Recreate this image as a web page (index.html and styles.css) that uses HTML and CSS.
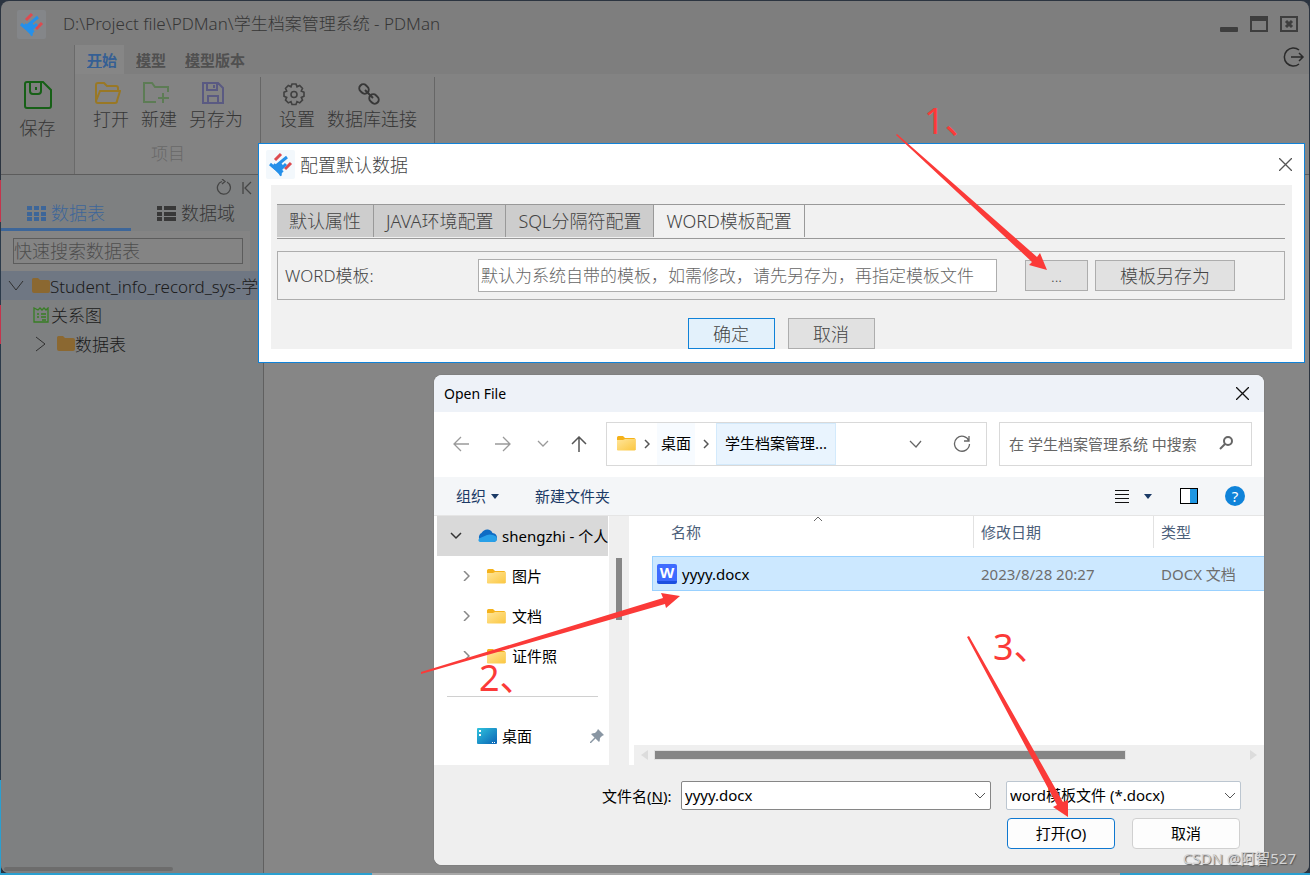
FILE: index.html
```html
<!DOCTYPE html>
<html lang="zh-CN">
<head>
    <meta charset="UTF-8">
    <meta name="viewport" content="width=device-width, initial-scale=1.0">
    <title>学生档案管理系统 - PDMan</title>
    <link rel="stylesheet" href="styles.css">
</head>
<body>
    <!-- Shared icons -->
    <svg class="defs" width="0" height="0">
        <symbol id="logo" viewBox="0 0 29 29">
            <g fill="none" stroke-width="3">
                <path class="logo-red" d="M9 10l6-6M19 19l6-6"/>
                <path class="logo-blue" d="M10 16l11-9M4 14l6 5 5 5M14 20l6-6" />
                <path class="logo-blue" stroke-width="5" d="M7 15l9 8M11 18l5-4M13 24l2-1"/>
            </g>
        </symbol>
        <symbol id="folder" viewBox="0 0 19 15">
            <path d="M0 1.500Q0 0 1.500 0H6L8 2H17Q18.500 2 18.500 3.500V14H0z" fill="#f5b21a"/>
            <path d="M0 4H6L8 3H18.500V13.500Q18.500 14.500 17.500 14.500H1Q0 14.500 0 13.500z" fill="url(#gold)"/>
        </symbol>
        <linearGradient id="gold" x1="0" y1="0" x2="1" y2="1">
            <stop offset="0" stop-color="#ffe59a"/>
            <stop offset="1" stop-color="#fbc740"/>
        </linearGradient>
        <linearGradient id="azure" x1="0" y1="0" x2="1" y2="1">
            <stop offset="0" stop-color="#2fc3dd"/>
            <stop offset="1" stop-color="#0b63b5"/>
        </linearGradient>
    </svg>

    <!-- Main window -->
    <div class="app">
        <header class="titlebar">
            <svg class="logo logo-dim" width="29" height="29"><use href="#logo"/></svg>
            <h1>D:\Project file\PDMan\学生档案管理系统 - PDMan</h1>
            <div class="win-buttons">
                <button aria-label="最小化"><svg width="18" height="16"><rect y="11" width="18" height="5" rx="1" fill="#3e3e3e"/></svg></button>
                <button aria-label="最大化"><svg width="18" height="16"><rect x="1" y="1" width="16" height="14" fill="none" stroke="#3e3e3e" stroke-width="2"/><path d="M0 0h18v5H0z" fill="#3e3e3e"/></svg></button>
                <button aria-label="关闭"><svg width="18" height="16"><rect x="1" y="1" width="16" height="14" fill="none" stroke="#3e3e3e" stroke-width="2"/><path d="M6 5l6 6M12 5l-6 6" stroke="#3e3e3e" stroke-width="3"/></svg></button>
            </div>
        </header>

        <div class="ribbon">
            <button class="save">
                <svg width="28" height="28" fill="none" stroke="#176017" stroke-width="2"><path d="M3 1h16l8 8v16q0 2-2 2H3q-2 0-2-2V3q0-2 2-2zM6 1v9q0 3 3 3h5q3 0 3-3V1"/><path d="M12 6v3"/></svg>
                保存
            </button>
            <div class="ribbon-main">
                <nav class="menu">
                    <a class="active" href="#"><u>开</u>始</a>
                    <a href="#"><u>模</u>型</a>
                    <a href="#"><u>模</u>型版本</a>
                    <button class="exit" aria-label="退出"><svg width="22" height="20" fill="none" stroke="#2a2a2a" stroke-width="1.500"><path d="M16 3A9 9 0 1 0 16 17M8 10h11M16 6l4 4-4 4"/></svg></button>
                </nav>
                <div class="groups">
                    <div class="group">
                        <div class="tools">
                            <button><svg width="26" height="22" fill="none" stroke="#997825" stroke-width="2"><path d="M1 19V3q0-2 2-2h6l3 3h9q2 0 2 2v3M1 19L5 9h20l-3 10q0 2-2 2H3q-2 0-2-2z"/></svg>打开</button>
                            <button><svg width="26" height="22" fill="none" stroke="#5d7c55" stroke-width="2"><path d="M13 20H1V1h8l3 4h13v5M20 11v10M15 16h11"/></svg>新建</button>
                            <button><svg width="26" height="22" fill="none" stroke="#5a5a82" stroke-width="2"><path d="M3 1h15l5 5v15H3zM7 1v7h10V1M8 21v-7h10v7M14 3v3"/></svg>另存为</button>
                        </div>
                        <div class="caption">项目</div>
                    </div>
                    <div class="group">
                        <div class="tools">
                            <button><svg width="24" height="24" viewBox="0 0 24 24" fill="none" stroke="#414141" stroke-width="1.600"><circle cx="12" cy="12" r="3"/><path d="M10 1.500h4l1 2.800 2.700-1.300 2.800 2.900-1.200 2.600 2.700 1.200v4l-2.700 1.200 1.200 2.700-2.800 2.800-2.700-1.300-1 2.900h-4l-1-2.900-2.700 1.300-2.800-2.800 1.200-2.700L2 13.700v-4l2.700-1.200L3.500 5.900 6.300 3 9 4.300z"/></svg>设置</button>
                            <button><svg width="24" height="24" fill="none" stroke="#383838" stroke-width="2"><rect x="2" y="3" width="10" height="8" rx="4" transform="rotate(45 7 7)"/><rect x="12" y="13" width="10" height="8" rx="4" transform="rotate(45 17 17)"/><path d="M8 8l8 8"/></svg>数据库连接</button>
                        </div>
                    </div>
                </div>
            </div>
        </div>

        <div class="workspace">
            <aside class="sidebar">
                <div class="side-actions">
                    <button aria-label="刷新"><svg width="16" height="16" fill="none" stroke="#454545" stroke-width="1.300"><path d="M11 3A6.500 6.500 0 1 1 6 2.500M6 0l3 2.500L6 5"/></svg></button>
                    <button aria-label="收起"><svg width="10" height="14" fill="none" stroke="#454545" stroke-width="1.300"><path d="M1 1v12M9 1L3 7l6 6"/></svg></button>
                </div>
                <div class="side-tabs">
                    <button class="active"><svg width="19" height="15" fill="#3d6699"><path d="M0 0h5v4H0zM7 0h5v4H7zM14 0h5v4h-5zM0 6h5v4H0zM7 6h5v4H7zM14 6h5v4h-5zM0 11h5v4H0zM7 11h5v4H7zM14 11h5v4h-5z"/></svg>数据表</button>
                    <button><svg width="19" height="15" fill="#383838"><path d="M0 0h5v4H0zM7 0h12v4H7zM0 6h5v4H0zM7 6h12v4H7zM0 11h5v4H0zM7 11h12v4H7z"/></svg>数据域</button>
                </div>
                <div class="side-search">
                    <input type="text" aria-label="快速搜索数据表" placeholder="快速搜索数据表">
                </div>
                <ul class="tree">
                    <li class="selected">
                        <svg class="twist" width="16" height="12" fill="none" stroke="#303030"><path d="M1 1l7 9 7-9"/></svg>
                        <svg width="18" height="15" fill="#8b6831"><path d="M0 1.500Q0 0 1.500 0H6L8 2h8q2 0 2 2v9q0 2-2 2H2q-2 0-2-2z"/></svg>
                        <span>Student_info_record_sys-学</span>
                    </li>
                    <li class="leaf">
                        <svg width="18" height="16" fill="none" stroke="#387d25" stroke-width="1.300"><path d="M1 1v14h14V1l-2 2-2-2-2 2-2-2-2 2zM4 7h2M8 7h5M4 10h2M8 10h5M9 13h4"/></svg>
                        <span>关系图</span>
                    </li>
                    <li class="branch">
                        <svg class="twist" width="16" height="16" fill="none" stroke="#303030"><path d="M3 1l9 7-9 7"/></svg>
                        <svg width="18" height="15" fill="#8b6831"><path d="M0 1.500Q0 0 1.500 0H6L8 2h8q2 0 2 2v9q0 2-2 2H2q-2 0-2-2z"/></svg>
                        <span>数据表</span>
                    </li>
                </ul>
                <div class="side-scroll"></div>
            </aside>
            <main class="canvas"></main>
        </div>
    </div>

    <!-- Default data dialog -->
    <section class="config">
        <header>
            <svg class="logo" width="29" height="29"><use href="#logo"/></svg>
            <h2>配置默认数据</h2>
            <button class="close" aria-label="关闭"><svg width="13" height="13" stroke="#555" stroke-width="1.300"><path d="M0 0l13 13M13 0L0 13"/></svg></button>
        </header>
        <div class="config-body">
            <div class="config-tabs">
                <button>默认属性</button>
                <button>JAVA环境配置</button>
                <button>SQL分隔符配置</button>
                <button class="active">WORD模板配置</button>
            </div>
            <div class="config-row">
                <label for="template">WORD模板:</label>
                <input type="text" id="template" placeholder="默认为系统自带的模板，如需修改，请先另存为，再指定模板文件">
                <button class="browse">...</button>
                <button class="save-as">模板另存为</button>
            </div>
            <div class="config-footer">
                <button class="primary">确定</button>
                <button>取消</button>
            </div>
        </div>
    </section>

    <!-- Open file dialog -->
    <section class="picker">
        <header>
            <h2>Open File</h2>
            <button aria-label="关闭"><svg width="13" height="13" stroke="#111" stroke-width="1.300"><path d="M0 0l13 13M13 0L0 13"/></svg></button>
        </header>
        <div class="picker-nav">
            <div class="arrows">
                <button aria-label="后退"><svg width="16" height="16" fill="none" stroke="#9a9a9a" stroke-width="1.300"><path d="M16 8H1M8 1L1 8l7 7"/></svg></button>
                <button aria-label="前进"><svg width="16" height="16" fill="none" stroke="#9a9a9a" stroke-width="1.300"><path d="M0 8h15M8 1l7 7-7 7"/></svg></button>
                <button aria-label="最近"><svg width="12" height="16" fill="none" stroke="#9a9a9a" stroke-width="1.300"><path d="M1 5l5 5 5-5"/></svg></button>
                <button aria-label="上移"><svg width="16" height="16" fill="none" stroke="#555" stroke-width="1.500"><path d="M8 16V1M1 8l7-7 7 7"/></svg></button>
            </div>
            <div class="path">
                <svg class="path-icon" width="19" height="15"><use href="#folder"/></svg>
                <svg class="path-sep" width="6" height="10" fill="none" stroke="#555" stroke-width="1.500"><path d="M1 1l4 4-4 4"/></svg>
                <a class="crumb" href="#">桌面</a>
                <svg class="path-sep" width="6" height="10" fill="none" stroke="#555" stroke-width="1.500"><path d="M1 1l4 4-4 4"/></svg>
                <a class="crumb current" href="#">学生档案管理...</a>
                <button class="history" aria-label="历史"><svg width="13" height="8" fill="none" stroke="#666" stroke-width="1.300"><path d="M1 1l6 6 5-6"/></svg></button>
                <button aria-label="刷新"><svg width="18" height="18" fill="none" stroke="#666" stroke-width="1.300"><path d="M16 6A7.500 7.500 0 1 0 16.500 9M16 1v5h-5"/></svg></button>
            </div>
            <div class="search">
                <input type="text" aria-label="搜索" placeholder="在 学生档案管理系统 中搜索">
                <svg width="15" height="15" fill="none" stroke="#666" stroke-width="2"><circle cx="9" cy="5" r="4"/><path d="M6 8l-5 5"/></svg>
            </div>
        </div>
        <div class="picker-tools">
            <button>组织<svg width="8" height="5" fill="#1b3a66"><path d="M0 0h8L4 5z"/></svg></button>
            <button>新建文件夹</button>
            <button class="view" aria-label="视图"><svg width="14" height="14" stroke="#111" stroke-width="1"><path d="M0 1.500h14M0 5.500h14M0 9.500h14M0 13.500h14"/></svg><svg width="8" height="5" fill="#1b3a66"><path d="M0 0h8L4 5z"/></svg></button>
            <button aria-label="预览窗格"><svg width="18" height="16"><rect x="1" y="1" width="16" height="14" fill="#fff"/><path d="M10 1h7v14h-7z" fill="#1f97e3"/><rect x=".5" y=".5" width="17" height="15" fill="none" stroke="#000"/></svg></button>
            <button class="help" aria-label="帮助">?</button>
        </div>
        <div class="picker-body">
            <div class="places">
                <ul>
                    <li class="root">
                        <svg width="12" height="8" fill="none" stroke="#333" stroke-width="1.500"><path d="M1 1l5 5 5-5"/></svg>
                        <svg width="20" height="14"><path d="M5 13a5 5 0 0 1-.5-9Q7 0 11 .500q3.500.500 4.500 3.500 4.500.500 4.500 5 0 4-4 4z" fill="#0f6cc4"/><path d="M3 13Q.500 12 2 9.500l8-3.500q3-1 6 0 4 1 4 4 0 3-4 3z" fill="#28a0e8"/></svg>
                        <span>shengzhi - 个人</span>
                    </li>
                    <li class="child"><svg width="7" height="10" fill="none" stroke="#888" stroke-width="1.500"><path d="M1 0l5 5-5 5"/></svg><svg width="19" height="15"><use href="#folder"/></svg><span>图片</span></li>
                    <li class="child"><svg width="7" height="10" fill="none" stroke="#888" stroke-width="1.500"><path d="M1 0l5 5-5 5"/></svg><svg width="19" height="15"><use href="#folder"/></svg><span>文档</span></li>
                    <li class="child"><svg width="7" height="10" fill="none" stroke="#888" stroke-width="1.500"><path d="M1 0l5 5-5 5"/></svg><svg width="19" height="15"><use href="#folder"/></svg><span>证件照</span></li>
                    <li class="line"></li>
                    <li class="desktop">
                        <svg width="20" height="16"><rect width="20" height="16" rx="1" fill="url(#azure)"/><path d="M2 2h2v2H2zM2 6h2v2H2zM15 14h1v1h-1zM17 14h1v1h-1z" fill="#fff"/></svg>
                        <span>桌面</span>
                        <svg class="pin" width="14" height="14" fill="#8996a3"><path d="M8 0l6 6-2 1-2 2q0 3-1 4L5.500 9.500 1 14l-1 0 0-1L4.500 8.500 1 5q2-1 4-1l2-2z"/></svg>
                    </li>
                </ul>
                <div class="v-scroll"><div class="v-thumb"></div></div>
            </div>
            <div class="files">
                <table>
                    <thead>
                        <tr>
                            <th class="name">名称<svg class="sort" width="10" height="6" fill="none" stroke="#666"><path d="M1 5l4-4 4 4"/></svg></th>
                            <th class="date">修改日期</th>
                            <th class="type">类型</th>
                        </tr>
                    </thead>
                    <tbody>
                        <tr>
                            <td><div class="file"><span class="word">W</span>yyyy.docx</div></td>
                            <td>2023/8/28 20:27</td>
                            <td>DOCX 文档</td>
                        </tr>
                    </tbody>
                </table>
                <div class="h-scroll">
                    <svg width="7" height="10" fill="#dcdcdc"><path d="M7 0v10L0 5z"/></svg>
                    <div class="h-track"><div class="h-thumb"></div></div>
                    <svg width="7" height="10" fill="#dcdcdc"><path d="M0 0v10l7-5z"/></svg>
                </div>
            </div>
        </div>
        <footer>
            <div class="fields">
                <label for="filename">文件名(<u>N</u>):</label>
                <input type="text" id="filename" value="yyyy.docx">
                <select aria-label="文件类型">
                    <option>word模板文件 (*.docx)</option>
                </select>
            </div>
            <div class="actions">
                <button class="open">打开(O)</button>
                <button>取消</button>
            </div>
        </footer>
    </section>

    <!-- Step arrows -->
    <svg class="steps" width="1310" height="875">
        <path d="M897 134L1037 257 1040 253 1047 270 1029 265 1032 262 896 135z"/>
        <path d="M421 672L663 598 661 593 680 596 666 608 665 604 421 674z"/>
        <path d="M969 636L1063 802 1068 800 1068 817 1053 807 1057 805 967 637z"/>
        <text x="924" y="134">1、</text>
        <text x="479" y="691">2、</text>
        <text x="993" y="660">3、</text>
    </svg>
    <div class="credit">CSDN @阿智527</div>
</body>
</html>
```
FILE: styles.css
```css
* {
    box-sizing: border-box;
}

body {
    margin: 0;
    height: 100vh;
    padding: 1px 1px 2px;
    position: relative;
    overflow: hidden;
    font-family: "Noto Sans", "Noto Sans CJK SC", sans-serif;
    font-size: 17px;
    line-height: 24px;
    color: #444;
    background: linear-gradient(#2b3440 0 180px, #c4344c 180px 222px, #2b3a4a 222px 305px, #c4344c 305px 344px, #2b3a4a 344px 780px, #2a9fd0 780px) left / 1px 100% no-repeat,
        linear-gradient(90deg, #2a9fd0 0 372px, #a8a8a8 372px 1120px, #2a9fd0 1120px) bottom / 100% 2px no-repeat,
        #2b3440;
}

button, input, select {
    font: inherit;
    color: inherit;
}

button {
    border: 0;
    padding: 0;
    background: none;
    cursor: pointer;
}

h1, h2 {
    margin: 0;
    font-size: 17px;
    font-weight: 300;
}

ul {
    margin: 0;
    padding: 0;
    list-style: none;
}

a {
    color: inherit;
    text-decoration: none;
}

svg {
    flex: none;
}

.defs {
    position: absolute;
}

.logo {
    background: #f3f8fc;
    border-radius: 2px;
}

.logo-red {
    stroke: #dd4b50;
}

.logo-blue {
    stroke: #2590ea;
}

.logo-dim {
    background: #848689;
}

.logo-dim .logo-red {
    stroke: #a04040;
}

/* Main window */
.app {
    height: 100%;
    display: flex;
    flex-direction: column;
    border-radius: 8px;
    overflow: hidden;
    background: #7e7e7e;
    color: #363636;
    font-weight: 300;
}

.titlebar {
    display: flex;
    align-items: center;
    height: 44px;
    padding: 2px 11px 0 16px;
    gap: 17px;
}

.win-buttons {
    margin-left: auto;
    display: flex;
    gap: 12px;
}

.win-buttons svg {
    display: block;
}

.ribbon {
    display: flex;
    height: 130px;
    border-bottom: 1px solid #5c5c5c;
}

.save {
    width: 74px;
    display: flex;
    flex-direction: column;
    align-items: center;
    gap: 7px;
    padding-top: 36px;
    font-size: 18px;
    border-right: 1px solid #6a6a6a;
}

.ribbon-main {
    flex: 1;
    display: flex;
    flex-direction: column;
}

.menu {
    display: flex;
    height: 29px;
    font-size: 15px;
    font-weight: 700;
    color: #505050;
}

.menu a {
    padding: 3px 7px 0 12px;
}

.menu .active {
    background: #868686;
    color: #355f94;
}

.exit {
    margin-left: auto;
    padding-right: 4px;
}

.exit svg {
    display: block;
    margin-top: -6px;
}

.groups {
    flex: 1;
    display: flex;
    background: #838383;
}

.group {
    margin-top: 3px;
    padding: 4px 17px 0 18px;
    border-right: 1px solid #666;
}

.tools {
    display: flex;
    gap: 12px;
}

.tools button {
    display: flex;
    flex-direction: column;
    align-items: center;
    font-size: 18px;
}

.tools svg {
    height: 26px;
    margin-right: 6px;
    padding-top: 1px;
}

.caption {
    margin-top: 11px;
    text-align: center;
    color: #686868;
}

.workspace {
    flex: 1;
    display: flex;
    min-height: 0;
}

.sidebar {
    width: 263px;
    display: flex;
    flex-direction: column;
    background: #7e8081;
    border-right: 1px solid #606060;
}

.side-actions {
    display: flex;
    justify-content: flex-end;
    gap: 10px;
    padding: 2px 11px 0;
    height: 23px;
}

.side-tabs {
    display: flex;
}

.side-tabs button {
    width: 130px;
    height: 33px;
    display: flex;
    align-items: center;
    justify-content: center;
    gap: 5px;
    font-size: 18px;
    border-bottom: 3px solid transparent;
}

.side-tabs .active {
    color: #3d6699;
    border-color: #3d6699;
}

.side-search {
    width: 249px;
    padding: 7px 7px 7px 12px;
    background: #848484;
}

.side-search input {
    display: block;
    width: 100%;
    height: 26px;
    padding: 0;
    border: 1px solid #5c5c5c;
    background: none;
    font-size: 18px;
}

.side-search input::placeholder {
    color: #4e4e4e;
}

.tree {
    color: #1a1a1a;
}

.tree li {
    display: flex;
    align-items: center;
    height: 29px;
    padding-left: 7px;
    white-space: nowrap;
}

.tree span {
    padding-top: 2px;
}

.tree .twist {
    margin-right: 8px;
}

.tree .selected {
    background: #6f7783;
}

.tree .leaf, .tree .branch {
    padding-left: 32px;
}

.side-scroll {
    width: 169px;
    height: 4px;
    margin: auto 0 2px 3px;
    border-radius: 2px;
    background: #6c6c6c;
}

.canvas {
    flex: 1;
    background: #868686;
}

/* Default data dialog */
.config {
    position: absolute;
    left: 258px;
    right: 5px;
    top: 143px;
    padding: 6px 12px 13px;
    border: 1px solid #1082d8;
    background: #fff;
    font-weight: 300;
}

.config header {
    display: flex;
    align-items: center;
    gap: 5px;
    margin-left: -5px;
    height: 29px;
}

.config h2 {
    font-size: 18px;
}

.close {
    margin-left: auto;
}

.close svg {
    display: block;
}

.config-body {
    margin-top: 6px;
    padding: 19px 7px 0 6px;
    background: #f1f1f1;
}

.config-tabs {
    display: flex;
    height: 35px;
    padding-bottom: 1px;
    border-top: 1px solid #999;
    border-bottom: 1px solid #999;
}

.config-tabs button {
    padding: 0 12px;
    border-right: 1px solid #999;
    background: #cdcdcd;
    font-size: 18px;
}

.config-tabs .active {
    background: none;
}

.config-row {
    display: flex;
    align-items: center;
    margin-top: 12px;
    padding: 7px;
    border: 1px solid #adadad;
}

.config-row label {
    width: 193px;
}

.config-row input {
    width: 519px;
    height: 33px;
    padding: 0 2px;
    border: 1px solid #adadad;
    background: #fff;
}

.config-row input::placeholder {
    color: #666;
}

.config-row button, .config-footer button {
    height: 31px;
    border: 1px solid #adadad;
    background: #e1e1e1;
}

.config-row .browse {
    width: 63px;
    margin: 0 7px 0 28px;
    font-size: 15px;
}

.config-row .save-as {
    width: 140px;
    font-size: 18px;
}

.config-footer {
    display: flex;
    justify-content: center;
    gap: 13px;
    margin-top: 18px;
}

.config-footer button {
    width: 87px;
    font-size: 18px;
}

.config-footer .primary {
    border-color: #1082d8;
    background: #e3f1fb;
}

/* Open file dialog */
.picker {
    position: absolute;
    left: 434px;
    right: 46px;
    top: 375px;
    border-radius: 8px;
    overflow: hidden;
    background: #fff;
    color: #000;
    font-size: 15px;
    box-shadow: 0 0 1px #555;
}

.picker header {
    display: flex;
    align-items: center;
    justify-content: space-between;
    height: 37px;
    padding: 0 15px 0 10px;
    background: #eef2f8;
}

.picker h2 {
    font-size: 14px;
    font-weight: 400;
}

.picker-nav {
    display: flex;
    align-items: center;
    height: 65px;
    padding: 0 12px 2px 19px;
}

.arrows {
    display: flex;
    gap: 26px;
    width: 153px;
}

.arrows svg {
    display: block;
}

.arrows button:last-child {
    margin-left: -4px;
}

.path {
    flex: 1;
    display: flex;
    align-items: center;
    height: 44px;
    padding: 0 15px 0 10px;
    border: 1px solid #d9d9d9;
}

.path svg {
    display: block;
}

.path-sep {
    margin: 0 7px 0 8px;
}

.crumb {
    height: 42px;
    padding: 8px 4px;
    background: #f7fbff;
    white-space: nowrap;
}

.crumb.current {
    padding: 7px 8px;
    background: #e9f4fe;
    border: 1px solid #d3eafc;
}

.history {
    margin: 0 31px 0 auto;
}

.search {
    display: flex;
    align-items: center;
    width: 253px;
    height: 44px;
    margin-left: 12px;
    padding: 0 17px 0 9px;
    border: 1px solid #d9d9d9;
}

.search input {
    flex: 1;
    min-width: 0;
    padding: 0;
    border: 0;
}

.search input::placeholder {
    color: #666;
}

.picker-tools {
    display: flex;
    align-items: center;
    gap: 36px;
    height: 39px;
    padding: 0 19px 0 22px;
    background: #f4f6f8;
    border-bottom: 1px solid #e5e5e5;
    color: #1b3a66;
}

.picker-tools button {
    display: flex;
    align-items: center;
    gap: 5px;
}

.picker-tools .view {
    gap: 15px;
    margin: 0 -8px 0 auto;
}

.picker-tools .help {
    justify-content: center;
    width: 20px;
    height: 20px;
    margin-left: -9px;
    border-radius: 50%;
    background: #0f83d9;
    color: #fff;
}

.picker-body {
    display: flex;
    height: 249px;
}

.places {
    display: flex;
    width: 195px;
    padding-left: 3px;
}

.places ul {
    flex: 1;
    min-width: 0;
    overflow: hidden;
}

.places li {
    display: flex;
    align-items: center;
    height: 40px;
    white-space: nowrap;
}

.places .root {
    gap: 15px;
    padding-left: 13px;
    margin-right: 1px;
    background: #d9d9d9;
    overflow: hidden;
}

.root span {
    margin-left: -10px;
}

.places .child {
    padding-left: 26px;
}

.child svg + svg {
    margin: 0 6px 0 17px;
}

.places .line::before {
    content: "";
    flex: 1;
    height: 1px;
    margin: 0 11px 0 10px;
    background: #d0d0d0;
}

.places .desktop {
    padding: 0 5px 0 40px;
    gap: 5px;
}

.pin {
    margin-left: auto;
}

.v-scroll {
    width: 20px;
    padding: 42px 7px 0;
    background: #efefef;
}

.v-thumb {
    height: 62px;
    background: #868686;
}

.files {
    flex: 1;
    display: flex;
    flex-direction: column;
    padding-left: 5px;
    min-width: 0;
}

.files table {
    margin-left: 18px;
    border-collapse: separate;
    border-spacing: 0;
    table-layout: fixed;
}

.files th {
    height: 32px;
    padding: 0 7px;
    text-align: left;
    font-weight: 400;
    color: #4c607a;
    border-right: 1px solid #e2e2e2;
}

.files th.name {
    position: relative;
    padding-left: 19px;
}

.files th.date {
    width: 180px;
}

.files th.type {
    width: 110px;
    border: 0;
}

.sort {
    position: absolute;
    left: 50%;
    top: 0;
}

.files tbody::before {
    content: "";
    display: block;
    height: 8px;
}

.files td {
    height: 35px;
    padding: 0 7px;
    background: #cce8ff;
    border-top: 1px solid #99d1ff;
    border-bottom: 1px solid #99d1ff;
    color: #6d6d6d;
}

.files td:first-child {
    padding-left: 4px;
    border-left: 1px solid #99d1ff;
    color: #000;
}

.file {
    display: flex;
    align-items: center;
    gap: 5px;
}

.word {
    width: 20px;
    height: 20px;
    border-radius: 2px;
    background: linear-gradient(#3e6bff 0 17px, #1c4fe0 17px);
    color: #fff;
    font-weight: 700;
    line-height: 17px;
    text-align: center;
}

.h-scroll {
    display: flex;
    align-items: center;
    gap: 7px;
    height: 20px;
    margin-top: auto;
    padding: 0 7px;
    background: #efefef;
}

.h-track {
    flex: 1;
}

.h-thumb {
    width: 80%;
    height: 8px;
    background: #868686;
    box-shadow: 0 0 0 1px #e0e0e0;
}

.picker footer {
    padding: 16px 23px 16px 168px;
    background: #efefef;
}

.fields {
    display: flex;
    align-items: center;
}

.fields label {
    width: 79px;
}

.fields input, .fields select {
    height: 29px;
    padding: 0 3px 2px;
    border: 1px solid #868686;
    border-radius: 2px;
    appearance: none;
    background: #fff url("data:image/svg+xml,%3Csvg width='12' height='7' xmlns='http://www.w3.org/2000/svg'%3E%3Cpath d='M1 1L6 6L11 1' fill='none' stroke='%23555'/%3E%3C/svg%3E") no-repeat right 4px center;
}

.fields input {
    flex: 1;
}

.fields select {
    width: 235px;
    margin-left: 15px;
    border-color: #bcc6d0;
}

.actions {
    display: flex;
    justify-content: flex-end;
    gap: 17px;
    margin: 8px 1px 0 0;
}

.actions button {
    width: 108px;
    height: 31px;
    padding-bottom: 2px;
    border: 1px solid #d0d0d0;
    border-radius: 4px;
    background: #fdfdfd;
}

.actions .open {
    border-color: #0f78d0;
}

/* Step arrows and credit line */
.steps {
    position: absolute;
    left: 0;
    top: 0;
    fill: #fb3a38;
    font-size: 36px;
    pointer-events: none;
}

.credit {
    position: absolute;
    right: 14px;
    bottom: 5px;
    font-size: 15px;
    color: #d4d4d4;
    text-shadow: 1px 1px 1px #555;
}
```
